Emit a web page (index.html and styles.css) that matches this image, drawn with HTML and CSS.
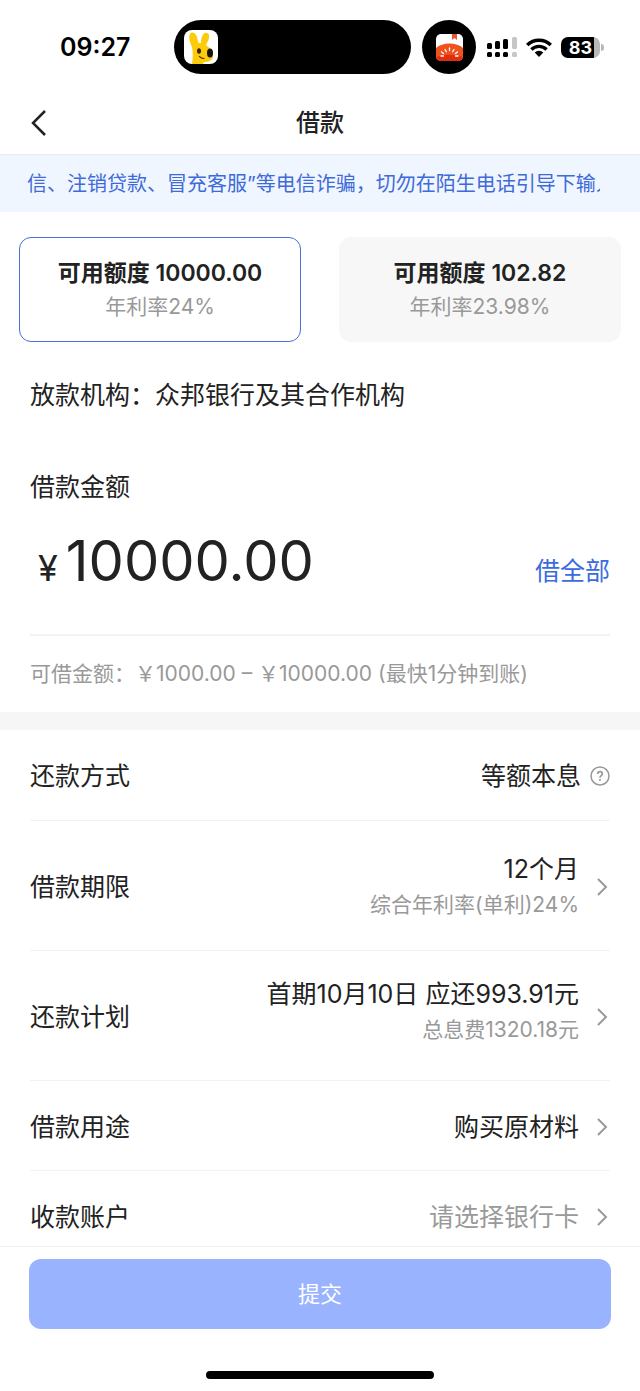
FILE: index.html
```html
<!DOCTYPE html>
<html lang="zh-CN">
<head>
  <meta charset="UTF-8" />
  <meta name="viewport" content="width=device-width, initial-scale=1" />
  <title>借款</title>
  <link rel="stylesheet" href="styles.css">
</head>
<body>

  <!-- Status bar -->
  <div class="status-bar">
    <span class="time">09:27</span>
    <div class="island">
      <svg width="34" height="34" viewBox="0 0 34 34">
        <rect width="34" height="34" rx="8" fill="#fff" />
        <path d="M8 34 C9 27 9 22 8 17 C6 12 4 7 6 4 C8 1 12 3 13 7 L14.500 13 H17 C17 9 18 4 21 3 C25 2 26 6 24.500 10 L22 15 C26 18 29 21 29 26 C29 30 25 32 20 32 L19 34 Z" fill="#fccb0c" />
        <ellipse cx="15" cy="21" rx="2" ry="2.800" fill="#3a2508" />
        <ellipse cx="26" cy="23" rx="3" ry="4.600" fill="#17120b" />
        <path d="M15.500 26.500 Q17 28.500 20 28.500" fill="none" stroke="#3a2508" stroke-width="1.200" stroke-linecap="round" />
      </svg>
    </div>
    <div class="island-dot">
      <svg width="27" height="27" viewBox="0 0 27 27">
        <clipPath id="tile"><rect width="27" height="27" rx="5" /></clipPath>
        <g clip-path="url(#tile)">
          <rect width="27" height="27" fill="#fff" />
          <path d="M0 14 C6 8 21 8 27 14 V27 H0 Z" fill="#f0521e" />
          <path d="M0 23 C8 20 19 20 27 23 V27 H0 Z" fill="#e02f10" />
          <path d="M16 0 H21 V6 L18.500 4 L16 6 Z" fill="#e8562c" />
          <path d="M13.500 14 V16.500 M9 15.500 L10.300 17.700 M18 15.500 L16.700 17.700 M5.500 18 L7.500 19.500 M21.500 18 L19.500 19.500 M5 22 H7.500 M22 22 H19.500" stroke="#fff" stroke-width="1.300" stroke-linecap="round" />
        </g>
      </svg>
    </div>
    <div class="status-icons">
      <svg width="30" height="21" viewBox="0 0 30 21">
        <g fill="#000">
          <rect x="0" y="6" width="5" height="6" rx="1.500" />
          <rect x="8" y="4" width="5" height="8" rx="1.500" />
          <rect x="16" y="2" width="5" height="10" rx="1.500" />
          <rect x="0" y="15" width="5" height="5" rx="1.500" />
          <rect x="8" y="15" width="5" height="5" rx="1.500" />
          <rect x="16" y="15" width="5" height="5" rx="1.500" />
        </g>
        <g fill="#c6c6c6">
          <rect x="25" y="0" width="5" height="12" rx="1.500" />
          <rect x="25" y="15" width="5" height="5" rx="1.500" />
        </g>
      </svg>
      <svg width="26" height="19" viewBox="0 0 26 19">
        <g fill="none" stroke="#000" stroke-width="3.400">
          <path d="M1.200 7 A17 17 0 0 1 24.800 7" />
          <path d="M5.400 11.400 A11 11 0 0 1 20.600 11.400" />
        </g>
        <path d="M13 19 L8.700 14.600 A6.200 6.200 0 0 1 17.300 14.600 Z" fill="#000" />
      </svg>
      <div class="battery">
        <span class="battery-level">83</span>
      </div>
    </div>
  </div>

  <!-- Title bar -->
  <header class="nav">
    <button class="back-btn" aria-label="返回">
      <svg width="16" height="26" viewBox="0 0 16 26"><path d="M15 1 L3 13 L15 25" fill="none" stroke="#222" stroke-width="2.500" /></svg>
    </button>
    <h1>借款</h1>
  </header>

  <div class="notice">
    <p>信、注销贷款、冒充客服”等电信诈骗，切勿在陌生电话引导下输入</p>
  </div>

  <main>
    <div class="quotas">
      <button class="quota active">
        <span class="quota-amount">可用额度 10000.00</span>
        <span class="quota-rate">年利率24%</span>
      </button>
      <button class="quota">
        <span class="quota-amount">可用额度 102.82</span>
        <span class="quota-rate">年利率23.98%</span>
      </button>
    </div>

    <p class="lender">放款机构：众邦银行及其合作机构</p>

    <section class="amount">
      <label for="amount">借款金额</label>
      <div class="amount-row">
        <span class="currency">¥</span>
        <input type="text" id="amount" inputmode="decimal" value="10000.00" />
        <button class="borrow-all">借全部</button>
      </div>
      <p class="range">可借金额：￥1000.00 – ￥10000.00 (最快1分钟到账)</p>
    </section>

    <ul class="rows">
      <li class="row">
        <span class="row-label">还款方式</span>
        <span class="row-value">等额本息</span>
        <button class="help" aria-label="还款方式说明">
          <svg width="20" height="20" viewBox="0 0 20 20" fill="none" stroke="#999">
            <circle cx="10" cy="10" r="9" stroke-width="1.500" />
            <path d="M7.700 8 C7.700 4.900 12.300 4.900 12.300 8 C12.300 9.800 10 9.600 10 11.700" stroke-width="1.700" />
            <path d="M10 13 V14.800" stroke-width="1.800" />
          </svg>
        </button>
      </li>
      <li class="row row-tall">
        <span class="row-label">借款期限</span>
        <span class="row-value">12个月<small>综合年利率(单利)24%</small></span>
        <svg class="arrow" viewBox="0 0 12 18"><path d="M2 1 L10 9 L2 17" /></svg>
      </li>
      <li class="row row-tall row-plan">
        <span class="row-label">还款计划</span>
        <span class="row-value">首期10月10日 应还993.91元<small>总息费1320.18元</small></span>
        <svg class="arrow" viewBox="0 0 12 18"><path d="M2 1 L10 9 L2 17" /></svg>
      </li>
      <li class="row">
        <span class="row-label">借款用途</span>
        <span class="row-value">购买原材料</span>
        <svg class="arrow" viewBox="0 0 12 18"><path d="M2 1 L10 9 L2 17" /></svg>
      </li>
      <li class="row">
        <span class="row-label">收款账户</span>
        <span class="row-value placeholder">请选择银行卡</span>
        <svg class="arrow" viewBox="0 0 12 18"><path d="M2 1 L10 9 L2 17" /></svg>
      </li>
    </ul>
  </main>

  <footer>
    <button class="submit">提交</button>
    <div class="home-indicator"></div>
  </footer>

</body>
</html>
```
FILE: styles.css
```css
/* Reset + base */
* {
  box-sizing: border-box;
  margin: 0;
  padding: 0;
}
body {
  height: 100vh;
  display: flex;
  flex-direction: column;
  font-family: Inter, 'Noto Sans CJK SC', sans-serif;
  font-size: 25px;
  line-height: 36px;
  color: #222;
  background: #fff;
}

button {
  font: inherit;
  color: inherit;
  background: none;
  border: none;
  cursor: pointer;
}

svg {
  display: block;
  flex-shrink: 0;
}

/* Status bar */
.status-bar {
  flex-shrink: 0;
  display: flex;
  align-items: center;
  height: 94px;
  padding: 0 40px 0 60px;
  color: #000;
}

.time {
  font-weight: 600;
  width: 114px;
}

.island {
  flex: 1;
  height: 54px;
  padding: 10px;
  border-radius: 27px;
  background: #000;
}

.island-dot {
  width: 54px;
  height: 54px;
  margin: 0 11px;
  border-radius: 50%;
  background: #000;
  display: grid;
  place-items: center;
}

.status-icons {
  display: flex;
  align-items: center;
  gap: 9px;
}

.battery {
  position: relative;
  width: 39px;
  height: 21px;
  border-radius: 7px;
  background: linear-gradient(to right, #000 33px, #b8b8b8 33px);
}
.battery::after {
  content: '';
  position: absolute;
  left: 40px;
  top: 7px;
  width: 3px;
  height: 7px;
  border-radius: 0 3px 3px 0;
  background: #b8b8b8;
}

.battery-level {
  display: block;
  text-align: center;
  font-size: 18px;
  font-weight: 700;
  line-height: 21px;
  color: #fff;
}

/* Title bar */
.nav {
  flex-shrink: 0;
  display: grid;
  grid-template-columns: 48px 1fr 48px;
  align-items: center;
  height: 60px;
  padding: 0 30px 2px;
}

.nav h1 {
  font-size: 24px;
  font-weight: 500;
  text-align: center;
}

/* Scrolling notice */
.notice {
  flex-shrink: 0;
  height: 58px;
  padding: 2px 40px 0 27px;
  border-top: 1px solid #e8edf3;
  background: #eff6ff;
}

.notice p {
  overflow: hidden;
  white-space: nowrap;
  font-size: 20px;
  line-height: 55px;
  color: #3f6ad8;
}

main {
  flex: 1;
  min-height: 0;
  overflow-y: auto;
  scrollbar-width: none;
}

/* Quota cards */
.quotas {
  display: grid;
  grid-template-columns: 1fr 1fr;
  gap: 38px;
  padding: 25px 19px 0;
}

.quota {
  display: flex;
  flex-direction: column;
  align-items: center;
  height: 105px;
  padding-top: 18px;
  border: 1px solid #f7f7f7;
  border-radius: 12px;
  background: #f7f7f7;
}
.quota.active {
  border-color: #4570d6;
  background: #fff;
}

.quota-amount {
  font-size: 23px;
  font-weight: 600;
  line-height: 34px;
}

.quota-rate {
  font-size: 21px;
  line-height: 34px;
  color: #999;
}

.lender {
  padding: 35px 30px 0;
}

/* Amount */
.amount {
  padding: 56px 30px 0;
  border-bottom: 18px solid #f6f6f6;
}

.amount label {
  display: block;
}

.amount-row {
  display: flex;
  align-items: baseline;
  padding: 20px 0 37px 8px;
  border-bottom: 2px solid #f3f3f3;
}

.currency {
  font-size: 36px;
  margin-right: 8px;
}

.amount-row input {
  flex: 1;
  min-width: 0;
  height: 72px;
  border: none;
  outline: none;
  background: none;
  font: inherit;
  font-size: 56px;
  color: inherit;
}

.borrow-all {
  align-self: flex-end;
  margin-bottom: 8px;
  color: #3b6be0;
}

.range {
  padding: 20px 0;
  font-size: 21px;
  color: #999;
}

/* Detail rows */
.rows {
  padding: 0 30px;
  list-style: none;
}

.row {
  display: flex;
  align-items: center;
  height: 90px;
  padding-top: 2px;
}
.row + .row {
  border-top: 1px solid #f3f3f3;
}
.row-tall {
  height: 130px;
}

.row-value {
  margin-left: auto;
  text-align: right;
}
.row-value small {
  display: block;
  font-size: 21px;
  color: #999;
}
.row-value.placeholder {
  color: #999;
}
.row-plan .row-value {
  padding-bottom: 10px;
}

.help {
  margin-left: 9px;
}

.arrow {
  width: 12px;
  height: 18px;
  margin-left: 17px;
  margin-right: 2px;
  fill: none;
  stroke: #999;
  stroke-width: 2;
}

/* Submit bar */
footer {
  flex-shrink: 0;
  padding: 12px 29px;
  border-top: 1px solid #eee;
  background: #fff;
}

.submit {
  display: block;
  width: 100%;
  height: 70px;
  border-radius: 12px;
  background: #99b3ff;
  font-size: 22px;
  color: #fff;
}

.home-indicator {
  width: 228px;
  height: 8px;
  margin: 42px auto 0;
  border-radius: 4px;
  background: #000;
}
```
